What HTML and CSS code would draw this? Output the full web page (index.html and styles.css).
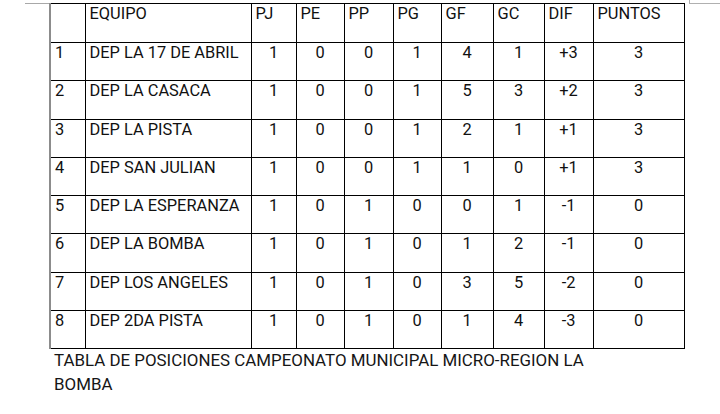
FILE: index.html
```html
<!DOCTYPE html>
<html lang="es">
<head>
<meta charset="utf-8">
<title>Tabla de posiciones</title>
<link rel="stylesheet" href="styles.css">
</head>
<body>
<div class="page">
  <table class="standings">
    <colgroup>
      <col class="c-pos"><col class="c-team"><col class="c-pj"><col class="c-pe"><col class="c-pp"><col class="c-pg"><col class="c-gf"><col class="c-gc"><col class="c-dif"><col class="c-pts">
    </colgroup>
    <thead>
      <tr class="head">
        <th></th><th>EQUIPO</th><th>PJ</th><th>PE</th><th>PP</th><th>PG</th><th>GF</th><th>GC</th><th>DIF</th><th>PUNTOS</th>
      </tr>
    </thead>
    <tbody>
      <tr><td class="pos">1</td><td class="team">DEP LA 17 DE ABRIL</td><td>1</td><td>0</td><td>0</td><td>1</td><td>4</td><td>1</td><td>+3</td><td>3</td></tr>
      <tr><td class="pos">2</td><td class="team">DEP LA CASACA</td><td>1</td><td>0</td><td>0</td><td>1</td><td>5</td><td>3</td><td>+2</td><td>3</td></tr>
      <tr><td class="pos">3</td><td class="team">DEP LA PISTA</td><td>1</td><td>0</td><td>0</td><td>1</td><td>2</td><td>1</td><td>+1</td><td>3</td></tr>
      <tr><td class="pos">4</td><td class="team">DEP SAN JULIAN</td><td>1</td><td>0</td><td>0</td><td>1</td><td>1</td><td>0</td><td>+1</td><td>3</td></tr>
      <tr><td class="pos">5</td><td class="team">DEP LA ESPERANZA</td><td>1</td><td>0</td><td>1</td><td>0</td><td>0</td><td>1</td><td>-1</td><td>0</td></tr>
      <tr><td class="pos">6</td><td class="team">DEP LA BOMBA</td><td>1</td><td>0</td><td>1</td><td>0</td><td>1</td><td>2</td><td>-1</td><td>0</td></tr>
      <tr><td class="pos">7</td><td class="team">DEP LOS ANGELES</td><td>1</td><td>0</td><td>1</td><td>0</td><td>3</td><td>5</td><td>-2</td><td>0</td></tr>
      <tr><td class="pos">8</td><td class="team">DEP 2DA PISTA</td><td>1</td><td>0</td><td>1</td><td>0</td><td>1</td><td>4</td><td>-3</td><td>0</td></tr>
    </tbody>
  </table>
  <p class="caption">TABLA DE POSICIONES CAMPEONATO MUNICIPAL MICRO-REGION LA<br>BOMBA</p>
</div>
</body>
</html>
```

FILE: styles.css
```css
html, body {
  margin: 0;
  padding: 0;
  background: #ffffff;
}

body {
  font-family: Roboto, "Liberation Sans", Arial, sans-serif;
  color: #111111;
  width: 720px;
  height: 414px;
  overflow: hidden;
}

.page {
  position: relative;
  padding: 3px 0 0 49px;
}

/* page-edge marks of the document */
.page::before {
  content: "";
  position: absolute;
  left: 25px;
  top: 3px;
  width: 24px;
  height: 1px;
  background: #a8a8a8;
}

.page::after {
  content: "";
  position: absolute;
  left: 689px;
  top: 0;
  width: 31px;
  height: 3px;
  border-left: 1px solid #b0b0b0;
  border-bottom: 1px solid #b0b0b0;
}

.standings {
  border-collapse: collapse;
  table-layout: fixed;
  width: 634px;
  font-size: 16.4px;
}

.c-pos { width: 35px; }
.c-team { width: 166px; }
.c-pj { width: 45px; }
.c-pe { width: 48px; }
.c-pp { width: 49px; }
.c-pg { width: 48px; }
.c-gf { width: 52px; }
.c-gc { width: 51px; }
.c-dif { width: 49px; }
.c-pts { width: 91px; }

.standings th,
.standings td {
  border: 1px solid #000000;
  padding: 0 4px 0 4px;
  vertical-align: top;
  line-height: 19px;
  white-space: nowrap;
  overflow: hidden;
}

.standings th {
  font-weight: normal;
  text-align: left;
}

.standings tr > :first-child {
  border-left: 2px solid #8c8c8c;
}

.standings .head {
  height: 39px;
}

.standings tbody tr {
  height: 38.3px;
}

.standings td {
  text-align: center;
}

.standings td.pos,
.standings td.team {
  text-align: left;
}

.caption {
  margin: 0;
  padding: 0 0 0 5px;
  font-size: 16.9px;
  line-height: 23.5px;
  color: #161616;
}
```
